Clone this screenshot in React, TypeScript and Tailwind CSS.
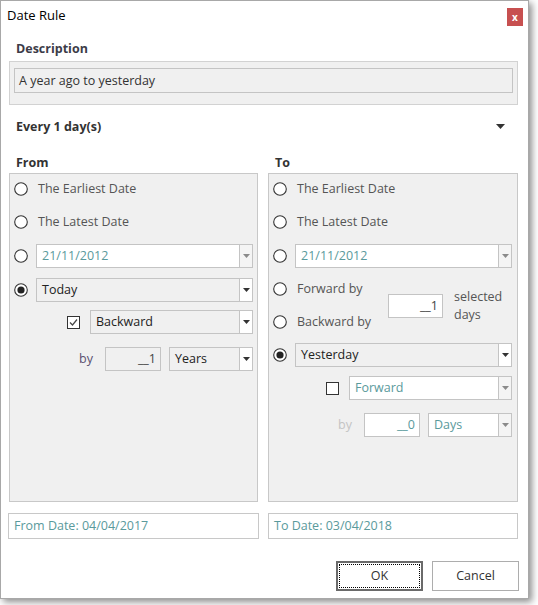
import React from "react";

const font = { fontFamily: '"Open Sans", "Noto Sans", sans-serif' };

function Radio({ checked = false }: { checked?: boolean }) {
  return (
    <svg width="14" height="14" viewBox="0 0 14 14" className="shrink-0">
      <circle cx="7" cy="7" r="6.3" fill="#fff" stroke="#333" strokeWidth="1.1" />
      {checked && <circle cx="7" cy="7" r="3.6" fill="#222" />}
    </svg>
  );
}

function Check({ checked = false }: { checked?: boolean }) {
  return (
    <div className="w-[13px] h-[13px] shrink-0 border border-[#333] bg-white flex items-center justify-center">
      {checked && (
        <svg width="11" height="11" viewBox="0 0 11 11">
          <polyline points="2,5.5 4.5,8 9,2.5" fill="none" stroke="#444" strokeWidth="1.2" />
        </svg>
      )}
    </div>
  );
}

function Arrow({ color }: { color: string }) {
  return (
    <svg width="7" height="4" viewBox="0 0 7 4">
      <polygon points="0,0 7,0 3.5,4" fill={color} />
    </svg>
  );
}

function Combo({
  text,
  disabled = false,
  gray = false,
  className = "",
}: {
  text: string;
  disabled?: boolean;
  gray?: boolean;
  className?: string;
}) {
  return (
    <div
      className={`h-[24px] flex border border-[#c4c4c4] ${gray ? "bg-[#f0f0f0]" : "bg-white"} ${className}`}
    >
      <div
        className={`flex-1 flex items-center pl-[5px] pt-[1px] text-[12.5px] ${disabled ? "text-[#5a9a9c]" : "text-[#222]"}`}
      >
        {text}
      </div>
      <div
        className={`w-[13px] border-l border-[#c4c4c4] flex items-center justify-center ${disabled ? "bg-[#f4f4f4]" : "bg-white"}`}
      >
        <Arrow color={disabled ? "#8a8a8a" : "#333"} />
      </div>
    </div>
  );
}

function NumBox({
  text,
  disabled = false,
  gray = false,
  className = "",
}: {
  text: string;
  disabled?: boolean;
  gray?: boolean;
  className?: string;
}) {
  return (
    <div
      className={`h-[24px] flex items-center justify-end pr-[4px] pt-[1px] border border-[#c4c4c4] text-[12.5px] ${gray ? "bg-[#f0f0f0]" : "bg-white"} ${disabled ? "text-[#5a9a9c]" : "text-[#444]"} ${className}`}
    >
      {text}
    </div>
  );
}

function RadioLabel({ label, checked = false, className = "" }: { label: string; checked?: boolean; className?: string }) {
  return (
    <div className={`h-[24px] flex items-center pl-[4px] ${className}`}>
      <Radio checked={checked} />
      <span className="ml-[10px] pt-[1px] text-[12.5px] text-[#555]">{label}</span>
    </div>
  );
}

function RadioCombo({
  text,
  checked = false,
  disabled = false,
  gray = false,
  className = "",
}: {
  text: string;
  checked?: boolean;
  disabled?: boolean;
  gray?: boolean;
  className?: string;
}) {
  return (
    <div className={`h-[24px] flex items-center pl-[4px] pr-[4px] ${className}`}>
      <Radio checked={checked} />
      <Combo text={text} disabled={disabled} gray={gray} className="ml-[8px] flex-1" />
    </div>
  );
}

export default function App() {
  return (
    <div className="w-[538px] h-[605px] bg-white" style={font}>
      <div className="w-[529px] h-[599px] bg-white border border-[#a8a8a8] shadow-[3px_3px_7px_rgba(0,0,0,0.45)] flex flex-col">
        {/* title bar */}
        <div className="h-[30px] flex items-center justify-between pl-[6px] pr-[5px]">
          <span className="text-[13px] text-black">Date Rule</span>
          <div className="w-[16px] h-[18px] bg-[#c75050] flex items-center justify-center mt-[2px]">
            <span className="text-white text-[10px] font-bold leading-none">x</span>
          </div>
        </div>

        {/* description */}
        <div className="h-[30px] pt-[7px] flex items-center pl-[15px]">
          <span className="text-[12.5px] font-bold text-[#3c3c48]">Description</span>
        </div>
        <div className="h-[44px] ml-[8px] mr-[10px] bg-[#f0f0f0] border border-[#d2d2d2] pt-[6px] px-[4px]">
          <div className="h-[25px] border border-[#c4c4c4] bg-[#f0f0f0] flex items-center pl-[4px] pt-[1px] text-[12.5px] text-[#333]">
            A year ago to yesterday
          </div>
        </div>

        {/* every */}
        <div className="h-[43px] flex items-center justify-between pl-[15px] pr-[23px]">
          <span className="pt-[2px] text-[12.5px] font-bold text-[#333]">Every 1 day(s)</span>
          <svg width="9" height="5" viewBox="0 0 9 5">
            <polygon points="0,0 9,0 4.5,5" fill="#333" />
          </svg>
        </div>

        {/* headers */}
        <div className="h-[25px] pt-[5px] flex items-center">
          <span className="w-[274px] pl-[15px] text-[12.5px] font-bold text-[#333]">From</span>
          <span className="text-[12.5px] font-bold text-[#333]">To</span>
        </div>

        {/* panels */}
        <div className="h-[329px] flex gap-[10px] ml-[8px]">
          {/* From */}
          <div className="w-[249px] h-full bg-[#f0f0f0] border border-[#c8c8c8] flex flex-col">
            <RadioLabel label="The Earliest Date" className="mt-[3px]" />
            <RadioLabel label="The Latest Date" className="mt-[9px]" />
            <RadioCombo text="21/11/2012" disabled className="mt-[10px]" />
            <RadioCombo text="Today" checked gray className="mt-[10px]" />
            <div className="h-[24px] mt-[8px] flex items-center pl-[57px] pr-[4px]">
              <Check checked />
              <Combo text="Backward" gray className="ml-[10px] flex-1" />
            </div>
            <div className="h-[24px] mt-[13px] flex items-center pl-[69px] pr-[4px]">
              <span className="w-[26px] pt-[1px] text-[12.5px] text-[#5a5070]">by</span>
              <NumBox text="__1" gray className="w-[56px]" />
              <Combo text="Years" gray className="ml-[8px] flex-1" />
            </div>
          </div>

          {/* To */}
          <div className="w-[250px] h-full bg-[#f0f0f0] border border-[#c8c8c8] flex flex-col">
            <RadioLabel label="The Earliest Date" className="mt-[3px]" />
            <RadioLabel label="The Latest Date" className="mt-[9px]" />
            <RadioCombo text="21/11/2012" disabled className="mt-[10px] pr-[5px]" />
            <div className="mt-[9px] flex items-center">
              <div className="w-[119px] flex flex-col gap-[9px]">
                <RadioLabel label="Forward by" />
                <RadioLabel label="Backward by" />
              </div>
              <NumBox text="__1" className="w-[55px]" />
              <div className="ml-[11px] pt-[1px] text-[12.5px] leading-[18px] text-[#555]">
                selected
                <br />
                days
              </div>
            </div>
            <RadioCombo text="Yesterday" checked gray className="mt-[9px] pr-[5px]" />
            <div className="h-[24px] mt-[9px] flex items-center pl-[57px] pr-[5px]">
              <Check />
              <Combo text="Forward" disabled className="ml-[10px] flex-1" />
            </div>
            <div className="h-[24px] mt-[13px] flex items-center pl-[69px] pr-[5px]">
              <span className="w-[26px] pt-[1px] text-[12.5px] text-[#c4c4c4]">by</span>
              <NumBox text="__0" disabled className="w-[56px]" />
              <Combo text="Days" disabled className="ml-[8px] flex-1" />
            </div>
          </div>
        </div>

        {/* result dates */}
        <div className="h-[26px] mt-[11px] ml-[7px] flex gap-[9px]">
          <div className="w-[251px] border border-[#c8c8c8] bg-white flex items-center pl-[5px] pt-[1px] text-[12.5px] text-[#5a9a9c]">
            From Date: 04/04/2017
          </div>
          <div className="w-[250px] border border-[#c8c8c8] bg-white flex items-center pl-[5px] pt-[1px] text-[12.5px] text-[#5a9a9c]">
            To Date: 03/04/2018
          </div>
        </div>

        {/* buttons */}
        <div className="h-[30px] mt-[22px] flex justify-end gap-[9px] pr-[9px]">
          <button className="w-[87px] h-full border-2 border-[#6a6a6a] bg-white p-[1px]">
            <div className="w-full h-full border border-dotted border-black flex items-center justify-center text-[12.5px] text-[#333]">
              OK
            </div>
          </button>
          <button className="w-[87px] h-full border border-[#adadad] bg-white flex items-center justify-center text-[12.5px] text-[#333]">
            Cancel
          </button>
        </div>
      </div>
    </div>
  );
}
